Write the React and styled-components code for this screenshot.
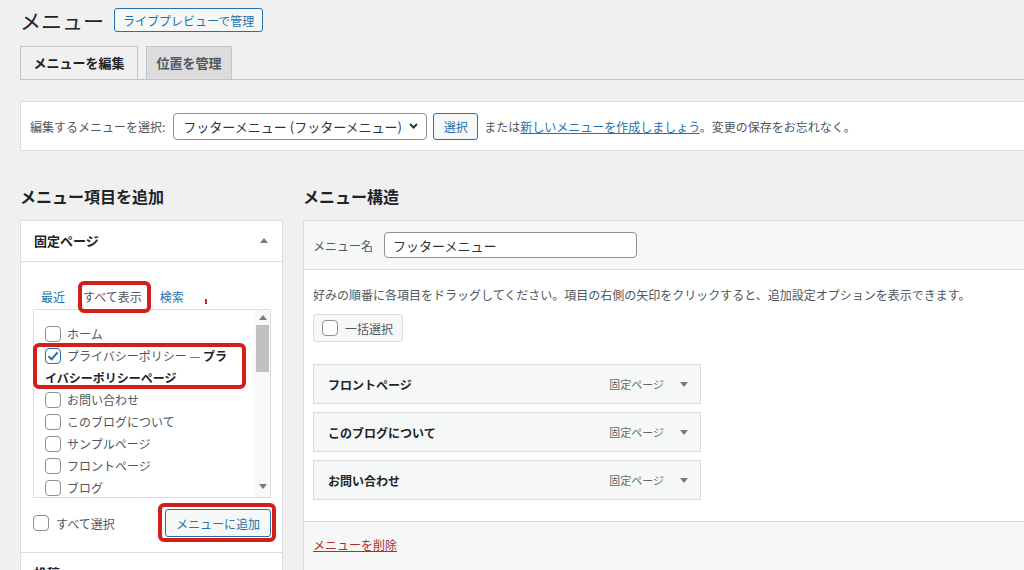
// React
import React from 'react'

// Styled components
import styled, { createGlobalStyle } from 'styled-components'


const Triangle = ({ up }) => (
  <svg width="8" height="5" viewBox="0 0 8 5">
    <path d={up ? 'M0 5 L4 0 L8 5 Z' : 'M0 0 L8 0 L4 5 Z'} fill="#787c82" />
  </svg>
)

const Chevron = () => (
  <svg width="9" height="6" viewBox="0 0 9 6">
    <path d="M1 1 L4.5 4.5 L8 1" fill="none" stroke="#2c3338" strokeWidth="2" />
  </svg>
)

const Check = ({ checked }) => (
  <Box $checked={checked}>
    {checked && (
      <svg width="14" height="14" viewBox="0 0 14 14">
        <path d="M2.5 7.2 L5.6 10.2 L11.6 3.4" fill="none" stroke="#2271b1" strokeWidth="2" />
      </svg>
    )}
  </Box>
)

const pages = [
  { label: 'ホーム' },
  { label: 'プライバシーポリシー', extra: 'プライバシーポリシーページ', checked: true, mark: true },
  { label: 'お問い合わせ' },
  { label: 'このブログについて' },
  { label: 'サンプルページ' },
  { label: 'フロントページ' },
  { label: 'ブログ' }
]

const menuItems = ['フロントページ', 'このブログについて', 'お問い合わせ']


function App() {
  return (
    <>
      <GlobalStyle />
      <Wrap>
        <HeaderRow>
          <Title>メニュー</Title>
          <OutlineButton $h={24}>ライブプレビューで管理</OutlineButton>
        </HeaderRow>

        <TabBar>
          <Tab $w={118} $active>メニューを編集</Tab>
          <Tab $w={86}>位置を管理</Tab>
        </TabBar>

        <SelectBar>
          <span>編集するメニューを選択:</span>
          <FakeSelect>
            <span>フッターメニュー (フッターメニュー)</span>
            <Chevron />
          </FakeSelect>
          <OutlineButton $h={27} $w={45}>選択</OutlineButton>
          <span>
            または<Link href="#">新しいメニューを作成しましょう</Link>。変更の保存をお忘れなく。
          </span>
        </SelectBar>

        <Columns>
          <div>
            <ColHeading>メニュー項目を追加</ColHeading>
            <SidePanel>
              <AccordionHead>
                固定ページ
                <Triangle up />
              </AccordionHead>
              <AccordionBody>
                <TabsRow>
                  <TabLink>最近</TabLink>
                  <TabLink $active $mark>すべて表示</TabLink>
                  <TabLink>検索</TabLink>
                  <RedTick />
                </TabsRow>
                <ListBox>
                  <ItemsCol>
                    {pages.map(p => (
                      <Item key={p.label} $mark={p.mark}>
                        <Check checked={p.checked} />
                        {p.label}
                        {p.extra && <> — <strong>{p.extra}</strong></>}
                      </Item>
                    ))}
                  </ItemsCol>
                  <Scrollbar>
                    <Triangle up />
                    <Thumb />
                    <Triangle />
                  </Scrollbar>
                </ListBox>
                <BottomRow>
                  <SelectAll>
                    <Check />
                    すべて選択
                  </SelectAll>
                  <AddButton>メニューに追加</AddButton>
                </BottomRow>
              </AccordionBody>
              <AccordionHead>投稿</AccordionHead>
            </SidePanel>
          </div>

          <div>
            <ColHeading>メニュー構造</ColHeading>
            <MainPanel>
              <PanelHead>
                <span>メニュー名</span>
                <NameInput>フッターメニュー</NameInput>
              </PanelHead>
              <PanelBody>
                <Description>
                  好みの順番に各項目をドラッグしてください。項目の右側の矢印をクリックすると、追加設定オプションを表示できます。
                </Description>
                <BulkButton>
                  <Check />
                  一括選択
                </BulkButton>
                <MenuList>
                  {menuItems.map(m => (
                    <MenuItem key={m}>
                      <MenuTitle>{m}</MenuTitle>
                      <MenuMeta>
                        固定ページ
                        <Triangle />
                      </MenuMeta>
                    </MenuItem>
                  ))}
                </MenuList>
              </PanelBody>
              <PanelFooter>
                <DeleteLink href="#">メニューを削除</DeleteLink>
              </PanelFooter>
            </MainPanel>
          </div>
        </Columns>
      </Wrap>
    </>
  )
}

/* STYLE */
const GlobalStyle = createGlobalStyle`
  html, body {
    margin: 0;
    padding: 0;
    background: #f0f0f1;
    overflow: hidden;
  }

  body {
    font-family: "Noto Sans CJK JP", "Noto Sans", sans-serif;
    font-size: 12px;
    color: #50575e;
  }

  * {
    box-sizing: border-box;
  }
`

const Wrap = styled.div`
  width: 1100px;
  padding-left: 20px;
`

const HeaderRow = styled.div`
  display: flex;
  align-items: center;
  gap: 10px;
  padding-top: 8px;
`

const Title = styled.h1`
  margin: 0;
  font-size: 21px;
  font-weight: 400;
  line-height: 24px;
  color: #1d2327;
`

const OutlineButton = styled.button`
  height: ${p => p.$h}px;
  width: ${p => (p.$w ? `${p.$w}px` : 'auto')};
  padding: 0 8px;
  border: 1px solid #2271b1;
  border-radius: 3px;
  background: #f6f7f7;
  color: #2271b1;
  font-family: inherit;
  font-size: 12px;
`

const TabBar = styled.div`
  display: flex;
  gap: 8px;
  margin-top: 14px;
  border-bottom: 1px solid #c3c4c7;
`

const Tab = styled.div`
  width: ${p => p.$w}px;
  height: 33px;
  display: flex;
  align-items: center;
  justify-content: center;
  padding-bottom: 2px;
  border: 1px solid #c3c4c7;
  border-bottom: none;
  background: ${p => (p.$active ? '#f0f0f1' : '#dcdcde')};
  color: ${p => (p.$active ? '#1d2327' : '#50575e')};
  font-size: 13px;
  font-weight: 700;
`

const SelectBar = styled.div`
  margin-top: 21px;
  height: 50px;
  display: flex;
  align-items: center;
  gap: 6px;
  padding: 0 9px;
  background: #fff;
  border: 1px solid #dcdcde;
`

const FakeSelect = styled.div`
  width: 254px;
  height: 27px;
  display: flex;
  align-items: center;
  justify-content: space-between;
  padding: 0 8px 0 9px;
  margin-left: 2px;
  border: 1px solid #8c8f94;
  border-radius: 4px;
  font-size: 13px;
  color: #2c3338;
`

const Link = styled.a`
  color: #2271b1;
  text-decoration: underline;
`

const Columns = styled.div`
  display: grid;
  grid-template-columns: 263px 1fr;
  gap: 20px;
  align-items: start;
  margin-top: 35px;
`

const ColHeading = styled.h2`
  margin: 0 0 14px;
  font-size: 16px;
  font-weight: 700;
  line-height: 20px;
  color: #1d2327;
`

const SidePanel = styled.div`
  background: #fff;
  border: 1px solid #dcdcde;
`

const AccordionHead = styled.div`
  height: 40px;
  display: flex;
  align-items: center;
  justify-content: space-between;
  padding: 0 14px 2px 13px;
  font-size: 13px;
  font-weight: 700;
  color: #1d2327;
`

const AccordionBody = styled.div`
  padding: 0 11px 15px 12px;
  border-top: 1px solid #dcdcde;
  border-bottom: 1px solid #dcdcde;
`

const redBox = `
  content: '';
  position: absolute;
  border: 4px solid #d31f1a;
  border-radius: 6px;
  pointer-events: none;
`

const TabsRow = styled.div`
  display: flex;
  gap: 18px;
  margin-top: 24px;
  padding-left: 8px;
  line-height: 22px;
`

const TabLink = styled.span`
  position: relative;
  color: ${p => (p.$active ? '#50575e' : '#2271b1')};

  &::after {
    ${p => (p.$mark ? redBox : '')}
    inset: -5px -9px -5px -5px;
  }
`

const RedTick = styled.span`
  align-self: flex-start;
  width: 2px;
  height: 5px;
  margin: 13px 0 0 3px;
  background: #d31f1a;
`

const ListBox = styled.div`
  height: 189px;
  margin-top: 1px;
  display: flex;
  border: 1px solid #dcdcde;
`

const ItemsCol = styled.div`
  flex: 1;
  padding: 13px 17px 0 11px;
`

const Item = styled.label`
  display: block;
  position: relative;
  line-height: 22px;
  color: #50575e;

  strong {
    color: #1d2327;
  }

  &::after {
    ${p => (p.$mark ? redBox : '')}
    inset: -2px -8px 0 -12px;
  }
`

const Box = styled.span`
  display: inline-flex;
  align-items: center;
  justify-content: center;
  width: 16px;
  height: 16px;
  margin: -3px 6px 0 0;
  vertical-align: middle;
  background: #fff;
  border: 1px solid ${p => (p.$checked ? '#2271b1' : '#8c8f94')};
  border-radius: 4px;
`

const Scrollbar = styled.div`
  width: 15px;
  display: flex;
  flex-direction: column;
  align-items: center;
  justify-content: flex-start;
  padding: 5px 0 8px;
  background: #f8f8f8;

  svg:last-child {
    margin-top: auto;
  }
`

const Thumb = styled.div`
  width: 13px;
  height: 47px;
  margin-top: 5px;
  background: #c1c1c1;
`

const BottomRow = styled.div`
  display: flex;
  align-items: center;
  justify-content: space-between;
  margin-top: 11px;
`

const SelectAll = styled.label`
  display: flex;
  align-items: center;
  color: #50575e;

  span {
    margin: 0 7px 0 0;
  }
`

const AddButton = styled.button`
  position: relative;
  width: 106px;
  height: 28px;
  border: 1px solid #2271b1;
  border-radius: 3px;
  background: #f6f7f7;
  color: #2271b1;
  font-family: inherit;
  font-size: 12px;

  &::after {
    ${redBox}
    inset: -7px -6px -6px -8px;
  }
`

const MainPanel = styled.div`
  background: #fff;
  border: 1px solid #dcdcde;
`

const PanelHead = styled.div`
  height: 49px;
  display: flex;
  align-items: center;
  gap: 11px;
  padding: 0 9px;
  background: #f6f7f7;
  border-bottom: 1px solid #dcdcde;
`

const NameInput = styled.div`
  width: 253px;
  height: 26px;
  display: flex;
  align-items: center;
  padding: 0 8px;
  background: #fff;
  border: 1px solid #8c8f94;
  border-radius: 4px;
  font-size: 13px;
  color: #2c3338;
`

const PanelBody = styled.div`
  padding: 16px 9px 21px;
`

const Description = styled.p`
  margin: 0;
  line-height: 18px;
`

const BulkButton = styled.div`
  width: 90px;
  height: 28px;
  margin-top: 10px;
  display: flex;
  align-items: center;
  padding: 0 7px 0 8px;
  white-space: nowrap;
  background: #f6f7f7;
  border: 1px solid #dcdcde;
  border-radius: 3px;

  span {
    margin: 0 7px 0 0;
  }
`

const MenuList = styled.div`
  display: flex;
  flex-direction: column;
  gap: 8px;
  margin-top: 22px;
`

const MenuItem = styled.div`
  width: 388px;
  height: 40px;
  display: flex;
  align-items: center;
  justify-content: space-between;
  padding: 0 12px 0 14px;
  background: #f6f7f7;
  border: 1px solid #dcdcde;
`

const MenuTitle = styled.span`
  font-weight: 700;
  color: #1d2327;
`

const MenuMeta = styled.span`
  display: flex;
  align-items: center;
  gap: 16px;
  font-size: 11px;
  color: #646970;
`

const PanelFooter = styled.div`
  padding: 14px 9px 30px;
  line-height: 18px;
  background: #f6f7f7;
  border-top: 1px solid #dcdcde;
`

const DeleteLink = styled.a`
  color: #b32d2e;
  text-decoration: underline;
`

export default App
